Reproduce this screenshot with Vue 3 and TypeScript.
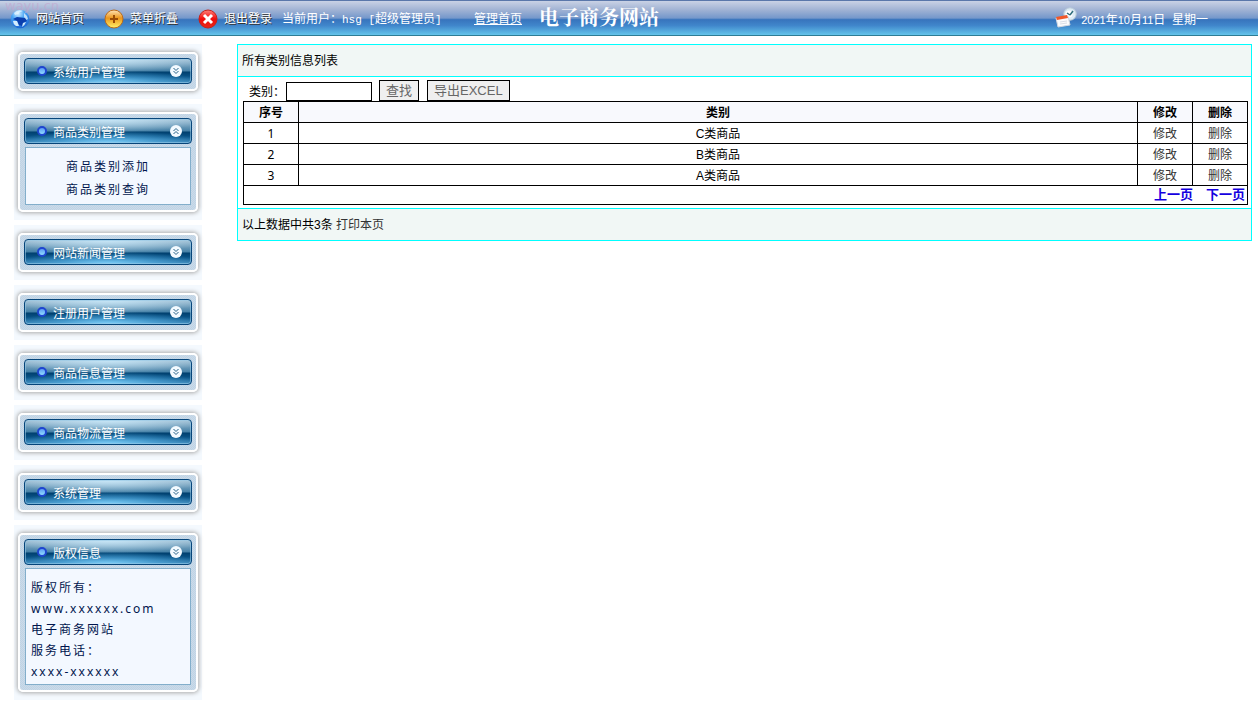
<script setup lang="ts">
interface MenuPanel {
  title: string
  open?: boolean
  links?: string[]
  lines?: string[]
}
const panels: MenuPanel[] = [
  { title: '系统用户管理' },
  { title: '商品类别管理', open: true, links: ['商品类别添加', '商品类别查询'] },
  { title: '网站新闻管理' },
  { title: '注册用户管理' },
  { title: '商品信息管理' },
  { title: '商品物流管理' },
  { title: '系统管理' },
  { title: '版权信息', lines: ['版权所有：', 'www.xxxxxx.com', '电子商务网站', '服务电话：', 'xxxx-xxxxxx'] },
]
const rows: string[] = ['C类商品', 'B类商品', 'A类商品']
</script>

<template>
  <div class="page">
    <header class="bar">
      <span class="mark">wayu.cn</span>
      <a href="#" class="tool">
        <svg class="icon" viewBox="0 0 20 20">
          <defs>
            <radialGradient id="globe" cx=".4" cy=".2" r=".85">
              <stop offset="0" stop-color="#d9f1ff" /><stop offset=".4" stop-color="#4aa6f6" /><stop offset="1" stop-color="#1560d0" />
            </radialGradient>
          </defs>
          <circle cx="10" cy="10" r="9.3" fill="url(#globe)" />
          <path d="M4 4Q8 0 13 2Q9 3 8 5L5 6ZM14 4Q17 6 18 10L16 11L14 8Z" fill="#e6f6ff" opacity=".75" />
          <path d="M3 10L7 8L15 9L17 12L13 14L12 17L9 16L7 12Z" fill="#0a3fae" />
          <path d="M3 12L7 12L9 17L6 17Q3 15 3 12ZM13 14L16 13Q15 16 12 18Z" fill="#e4f7ff" opacity=".9" />
        </svg>
        <span>网站首页</span>
      </a>
      <button type="button" class="tool">
        <svg class="icon" viewBox="0 0 20 20">
          <defs>
            <linearGradient id="orange" x2="0" y2="1">
              <stop offset="0" stop-color="#ffe4b8" /><stop offset=".45" stop-color="#ec961c" /><stop offset="1" stop-color="#fff36a" />
            </linearGradient>
          </defs>
          <circle cx="10" cy="10" r="9" fill="url(#orange)" stroke="#bd6b19" />
          <path d="M10 6V14M6 10H14" stroke="#9b4c05" stroke-width="2" />
        </svg>
        <span>菜单折叠</span>
      </button>
      <a href="#" class="tool exit">
        <svg class="icon" viewBox="0 0 20 20">
          <defs>
            <linearGradient id="red" x2="0" y2="1">
              <stop offset="0" stop-color="#ff8078" /><stop offset=".5" stop-color="#f00b0b" /><stop offset="1" stop-color="#e52a19" />
            </linearGradient>
          </defs>
          <circle cx="10" cy="10" r="9" fill="url(#red)" stroke="#c8201a" />
          <path d="M6 6L14 14M14 6L6 14" stroke="#fff" stroke-width="3" />
        </svg>
        <span>退出登录</span>
      </a>
      <span class="user">当前用户：<span class="mono">hsg [</span>超级管理员<span class="mono">]</span></span>
      <a href="#" class="home">管理首页</a>
      <h1>电子商务网站</h1>
      <div class="date">
        <svg class="calendar" viewBox="0 0 22 22">
          <circle cx="15" cy="7" r="6.2" fill="#dcebf4" stroke="#b9cbd8" />
          <circle cx="14" cy="7" r="3.5" fill="#fff" />
          <path d="M15 8L18 4M15 8L12 6" stroke="#2f6f7c" stroke-width="1.5" />
          <path d="M1 11L13 9L15 18L3 20Z" fill="#fbfbfd" stroke="#d3d7df" />
          <path d="M1 10L12 8L13 11L2 13Z" fill="#f0582a" />
          <path d="M5 15L12 14M5 17L12 16" stroke="#d9dde6" />
        </svg>
        <span><span class="digits">2021</span>年<span class="digits">10</span>月<span class="digits">11</span>日&nbsp; 星期一</span>
      </div>
    </header>
    <div class="body">
      <nav class="side">
        <section v-for="panel in panels" :key="panel.title" class="panel">
          <div class="frame">
            <button type="button" class="head">
              <span class="dot"></span>
              <span class="label">{{ panel.title }}</span>
              <svg class="chevron" viewBox="0 0 12 12">
                <circle cx="6" cy="6" r="6" fill="#f3faff" />
                <path :d="panel.open ? 'M3.5 6L6 3.5L8.5 6M3.5 9L6 6.5L8.5 9' : 'M3.5 3L6 5.5L8.5 3M3.5 6L6 8.5L8.5 6'" fill="none" stroke="#286287" />
              </svg>
            </button>
            <div v-if="panel.links" class="inner links">
              <a v-for="link in panel.links" :key="link" href="#">{{ link }}</a>
            </div>
            <div v-if="panel.lines" class="inner lines">
              <div v-for="line in panel.lines" :key="line">{{ line }}</div>
            </div>
          </div>
        </section>
      </nav>
      <main class="main">
        <div class="strip">所有类别信息列表</div>
        <div class="content">
          <form class="search" @submit.prevent>
            <label for="category">类别：</label>
            <input id="category" type="text" />
            <button type="submit">查找</button>
            <button type="button">导出EXCEL</button>
          </form>
          <table>
            <thead>
              <tr><th class="narrow">序号</th><th>类别</th><th class="narrow">修改</th><th class="narrow">删除</th></tr>
            </thead>
            <tbody>
              <tr v-for="(row, i) in rows" :key="row">
                <td class="num">{{ i + 1 }}</td><td>{{ row }}</td>
                <td><a href="#">修改</a></td><td><a href="#">删除</a></td>
              </tr>
              <tr class="pager"><td colspan="4"><a href="#">上一页</a><a href="#">下一页</a></td></tr>
            </tbody>
          </table>
        </div>
        <div class="strip foot">以上数据中共3条 <a href="#">打印本页</a></div>
      </main>
    </div>
  </div>
</template>

<style>
body { margin: 0; background: #fff; }
</style>

<style scoped>
.page { font: 12px/18px "Liberation Sans", "Noto Sans CJK SC", sans-serif; color: #000; }
a { color: inherit; text-decoration: none; }
button { font-family: inherit; cursor: pointer; }
.bar {
  position: relative; box-sizing: border-box; display: flex; align-items: center; height: 36px; padding: 2px 50px 0 10px;
  color: #fff; border-top: 1px solid #5a77aa; border-bottom: 1px solid #2e7c94; white-space: nowrap;
  background: linear-gradient(#c9d2e5 0, #a4b5d5 24%, #7598cb 50%, #3774bd 55%, #4086cb 72%, #64c4ea 100%);
}
.mark { position: absolute; left: 5px; top: -4px; font: 13px/18px "DejaVu Sans", sans-serif; color: #c3a5cf; opacity: .6; }
.tool { display: flex; align-items: center; gap: 6px; width: 94px; padding: 0; border: 0; background: none; font-size: 12px; line-height: 18px; color: #fff; text-shadow: 1px 1px 0 #333; }
.icon { width: 20px; height: 20px; flex: none; }
.tool.exit { width: 84px; }
.user { width: 192px; }
.mono { font-family: "Liberation Mono", monospace; font-size: 11px; }
.home { text-decoration: underline; }
h1 { margin: 0 auto 3px 17px; font: bold 20px/24px "Liberation Serif", "Noto Serif CJK SC", "Noto Sans CJK SC", serif; }
.date { display: flex; align-items: center; gap: 4px; padding-top: 2px; }
.digits { font-size: 11px; }
.calendar { width: 22px; height: 22px; margin-bottom: 4px; }
.body { display: flex; align-items: flex-start; padding: 8px 6px 0 14px; }
.side { flex: none; width: 188px; display: grid; gap: 5px; margin-right: 35px; }
.panel { padding: 8px 4px; background: #f4f9fe; }
.frame {
  padding: 4px 4px 5px; border: 2px solid #fff; border-radius: 5px;
  background: repeating-conic-gradient(#bfd3e5 0 25%, #cbdbe9 0 50%) 0 0 / 2px 2px;
  box-shadow: 0 0 4px 1px #aaa;
}
.head {
  display: flex; align-items: center; box-sizing: border-box; width: 100%; height: 26px; padding: 0 9px 0 12px;
  border: 1px solid #06457a; border-radius: 4px; color: #fff; font-size: 12px; line-height: 18px; text-align: left;
  background: radial-gradient(60% 50% at 50% 100%, #7fd0fa 0, rgba(90, 180, 232, .6) 50%, transparent),
    radial-gradient(60% 55% at 50% 0, rgba(205, 236, 252, .9) 0, transparent),
    linear-gradient(#a3c0d4, #4580a6 50%, #00406f 54%, #0a5488 75%, #3f88b8);
  box-shadow: inset 0 0 0 1px rgba(150, 200, 230, .6);
}
.dot { box-sizing: border-box; width: 10px; height: 10px; border: 2px solid #1f45cf; border-radius: 50%; background: linear-gradient(#5d9cf5, #8fdcff); }
.label { margin: 4px auto 0 6px; }
.chevron { width: 12px; height: 12px; }
.inner { margin: 3px 1px 0; border: 1px solid #82aecb; background: #f3f8ff; color: #00154d; letter-spacing: 2px; }
.links { padding: 8px 0 2px; text-align: center; line-height: 23px; }
.links a { display: block; }
.lines { padding: 8px 5px 2px; font-family: "Noto Sans", "Noto Sans CJK SC", sans-serif; line-height: 21px; }
.main { flex: 1; min-width: 0; border: 1px solid #0ff; }
.strip { padding: 7px 5px 6px 4px; background: #f1f7f5; border-bottom: 1px solid #0ff; }
.strip.foot { border-top: 1px solid #0ff; border-bottom: 0; }
.foot a { color: #333; }
.content { padding: 3px 3px 3px 5px; }
.search { display: flex; align-items: flex-end; padding-left: 6px; }
.search label { width: 37px; line-height: 18px; }
.search input { box-sizing: border-box; width: 86px; height: 19px; margin-right: 7px; border: 1px solid #000; padding: 1px; }
.search button { box-sizing: border-box; height: 21px; margin-right: 8px; padding: 0 6px; border: 1px solid #000; background: #efefef; color: #666; font-size: 13px; line-height: 19px; }
table { width: 100%; border-collapse: collapse; table-layout: fixed; text-align: center; }
th, td { padding: 2px 1px 0; border: 1px solid #000; height: 18px; }
th { background: #f8f9fd; }
.narrow { width: 52px; }
td a { color: #333; }
.num { font-family: "Noto Sans", sans-serif; }
.pager td { padding: 1px 2px 1px 0; text-align: right; height: 16px; line-height: 16px; font-size: 13px; font-weight: bold; }
.pager a { color: #1500e0; margin-left: 13px; }
</style>
